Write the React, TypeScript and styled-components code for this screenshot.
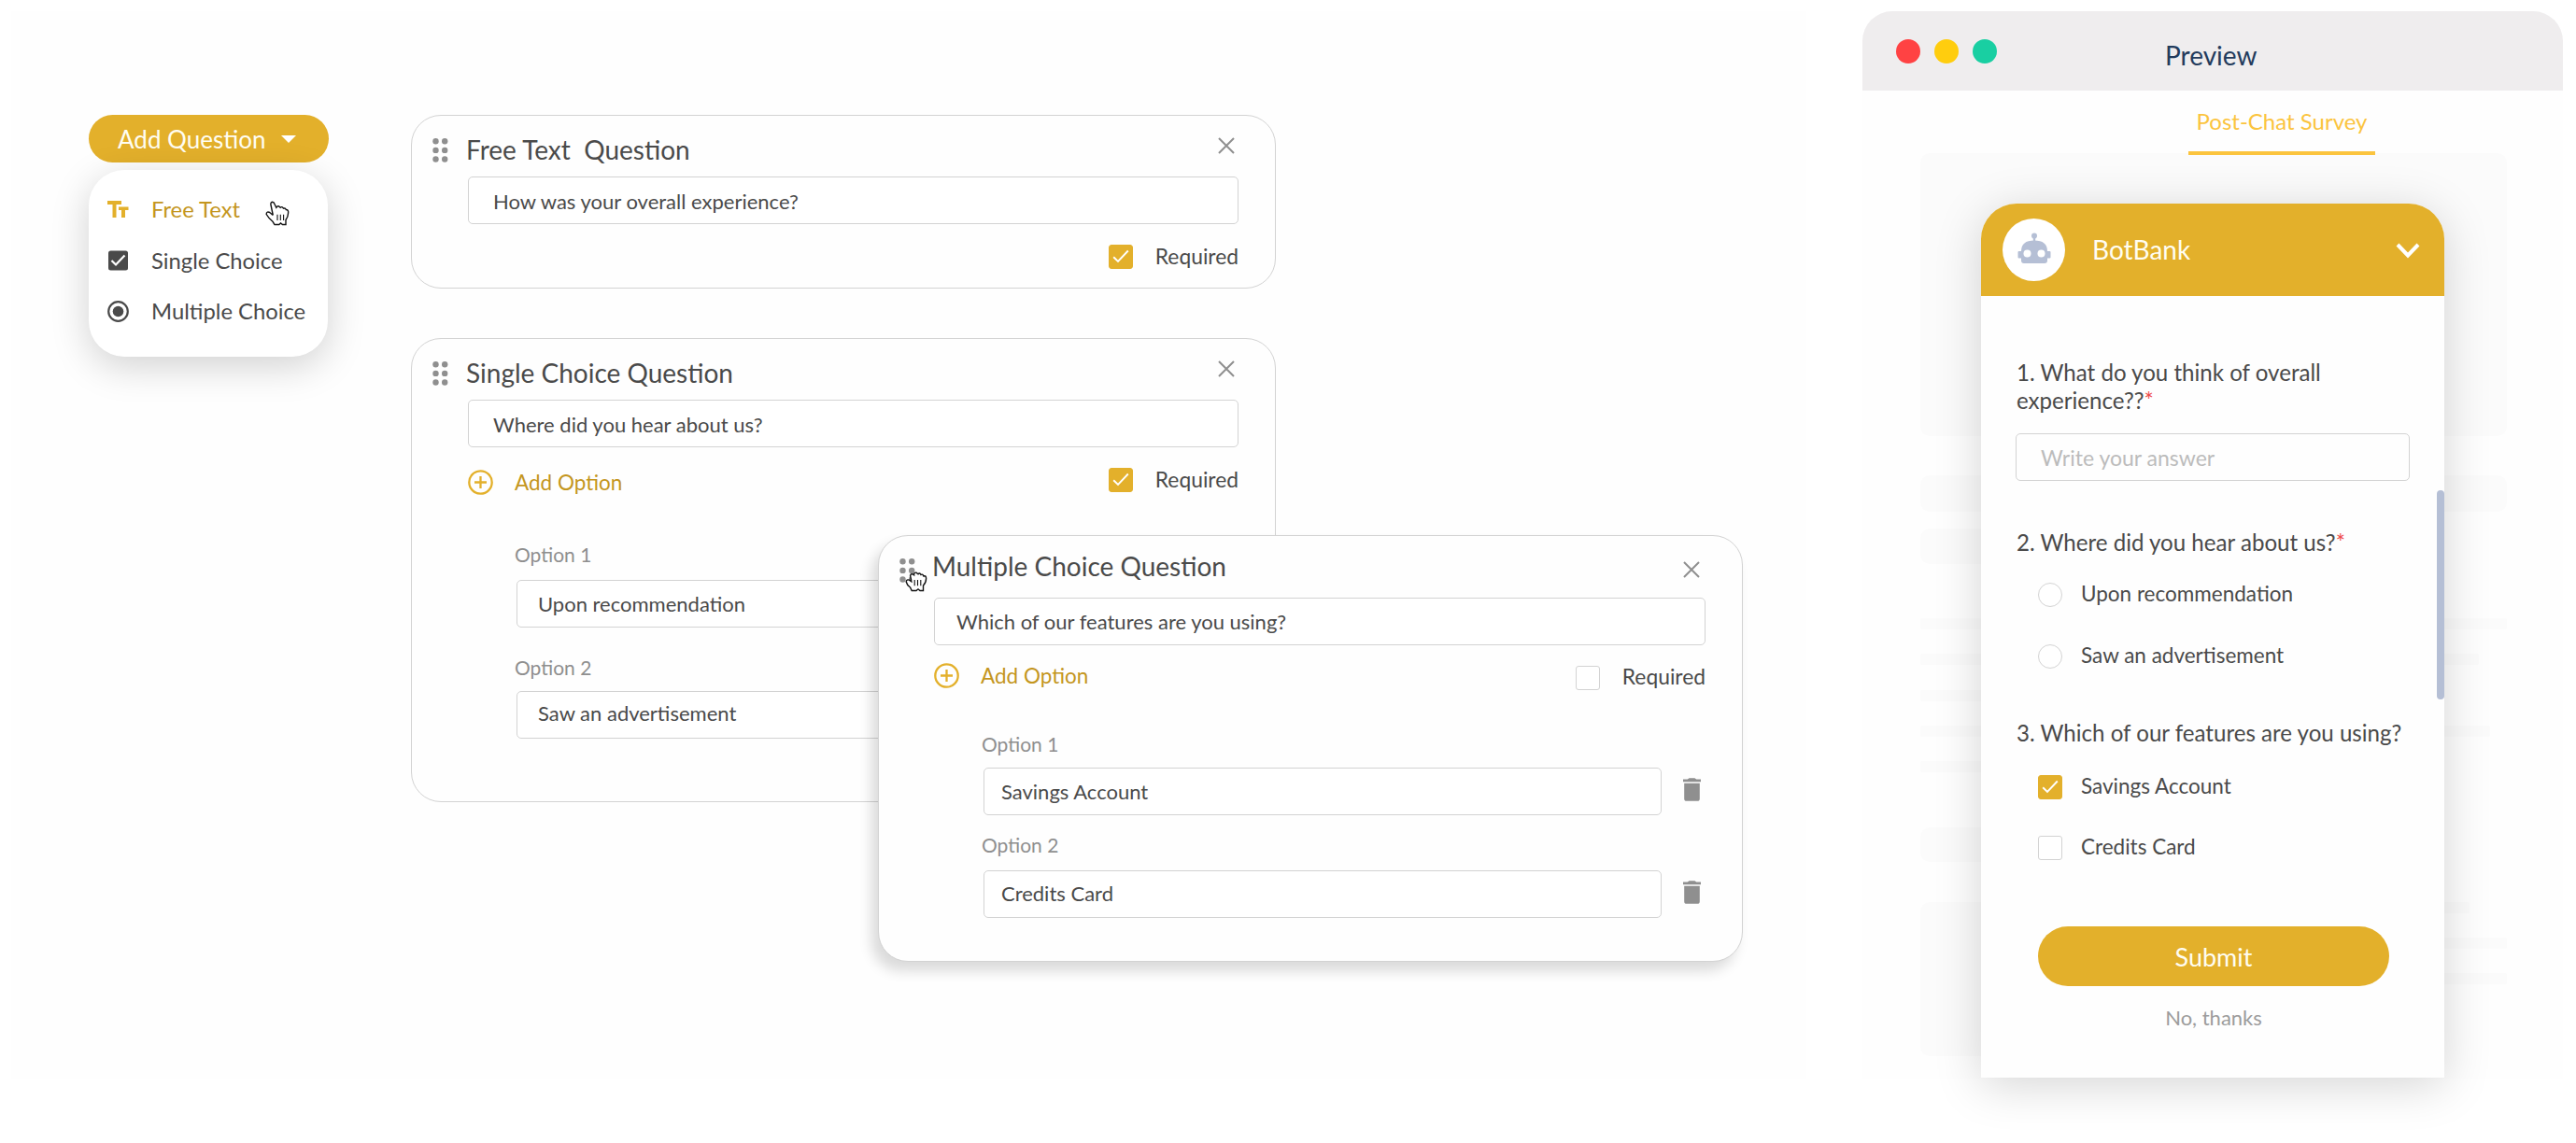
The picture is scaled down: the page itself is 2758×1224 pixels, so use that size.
import React from "react";
import styled, { createGlobalStyle, css } from "styled-components";

const GlobalStyle = createGlobalStyle`
  * {
    box-sizing: border-box;
  }

  body {
    margin: 0;
    background-color: #ffffff;
    color: #4a4a4a;
    font-family: Lato, sans-serif;
  }
`;

const gold = "#e3b02b";
const darkGold = "#c4961e";
const line = "#d3d3d3";

export const Page = styled.main`
  width: 2758px;
  height: 1224px;
  display: flex;
  overflow: hidden;
`;

export const Builder = styled.section`
  position: relative;
  width: 1922px;
  height: 1144px;
  margin: 12px 60px 0 12px;
  padding: 111px 0 0 83px;
  display: flex;
  align-items: flex-start;
  background-color: #fefefe;
`;

export const AddQuestion = styled.div`
  width: 257px;
  margin-right: 88px;
`;

export const AddButton = styled.button`
  width: 257px;
  height: 51px;
  padding: 1px 35px 0 31px;
  display: flex;
  align-items: center;
  justify-content: space-between;
  border: none;
  border-radius: 26px;
  background-color: ${gold};
  color: #fffdf2;
  font-family: inherit;
  font-size: 26px;
  line-height: 32px;
`;

export const Menu = styled.ul`
  position: relative;
  width: 256px;
  height: 200px;
  margin: 8px 0 0;
  padding: 15px 0 0 20px;
  list-style: none;
  border-radius: 38px;
  background-color: #ffffff;
  box-shadow: 0 10px 40px rgba(0, 0, 0, 0.18);
`;

export const MenuItem = styled.li<{ $active?: boolean }>`
  height: 54.5px;
  display: flex;
  align-items: center;
  gap: 24px;
  color: ${({ $active }) => ($active ? darkGold : "#4a4a4a")};
  font-size: 23.8px;

  svg {
    flex: none;
  }
`;

export const MenuCursor = styled.svg`
  position: absolute;
  left: 189px;
  top: 33px;
`;

export const CardList = styled.div`
  display: flex;
  flex-direction: column;
  gap: 53px;
`;

export const Card = styled.article<{ $height: number; $dragged?: boolean }>`
  width: 926px;
  height: ${({ $height }) => $height}px;
  padding: 0 39px 0 60px;
  border: 1px solid ${line};
  border-radius: 32px;
  background-color: #fefefe;

  ${({ $dragged }) =>
    $dragged &&
    css`
      position: absolute;
      left: 928px;
      top: 561px;
      padding-left: 59px;
      box-shadow: -7px 10px 14px rgba(0, 0, 0, 0.14);
    `}
`;

export const CardHeader = styled.header<{ $dragged?: boolean }>`
  height: ${({ $dragged }) => ($dragged ? 66 : 65)}px;
  margin-left: ${({ $dragged }) => ($dragged ? -37 : -38)}px;
  padding-top: 24px;
  display: flex;
  align-items: flex-start;
`;

export const CardTitle = styled.h2<{ $dragged?: boolean }>`
  flex: 1;
  margin: ${({ $dragged }) => ($dragged ? "-9px 0 0 18px" : "-5px 0 0 19px")};
  font-size: 28px;
  font-weight: 400;
  line-height: 34px;
  white-space: pre;
`;

export const CloseIcon = styled.svg<{ $dragged?: boolean }>`
  margin: ${({ $dragged }) => ($dragged ? "3px 6px 0 0" : "-1px 4px 0 0")};
`;

export const Field = styled.div<{ $indent?: number; $lift?: number }>`
  height: 51px;
  flex: 1;
  padding-left: ${({ $indent }) => $indent ?? 27}px;
  border: 1px solid ${line};
  border-radius: 5px;
  background-color: #ffffff;
  font-size: 22px;
  line-height: ${({ $lift }) => 50 - 2 * ($lift ?? 0)}px;
`;

export const Tools = styled.div`
  height: 26px;
  margin-top: 22px;
  display: flex;
  align-items: center;
`;

export const AddOption = styled.span<{ $dragged?: boolean }>`
  margin-top: ${({ $dragged }) => ($dragged ? -5 : 5)}px;
  display: flex;
  align-items: center;
  gap: 23px;
  color: ${darkGold};
  font-size: 22.5px;
`;

export const Required = styled.label`
  margin-left: auto;
  display: flex;
  align-items: center;
  gap: 24px;
  font-size: 22.8px;
  line-height: 22px;
`;

export const RequiredText = styled.span<{ $dragged?: boolean }>`
  padding-bottom: ${({ $dragged }) => ($dragged ? 4 : 3)}px;
`;

export const Option = styled.div<{ $gap: number; $dragged?: boolean }>`
  margin: ${({ $gap }) => $gap}px 0 0 ${({ $dragged }) => ($dragged ? 53 : 52)}px;
`;

export const OptionLabel = styled.div<{ $height: number }>`
  height: ${({ $height }) => $height}px;
  margin-left: -2px;
  color: #8f8f8f;
  font-size: 21px;
  line-height: 26px;
`;

export const OptionRow = styled.div`
  display: flex;
  align-items: center;
  gap: 23px;
  padding-right: 5px;

  svg {
    margin-bottom: 4px;
  }
`;

export const GrabCursor = styled.svg`
  position: absolute;
  left: 28px;
  top: 38px;
`;

export const Preview = styled.aside`
  width: 750px;
  height: 1144px;
  margin-top: 12px;
`;

export const TitleBar = styled.header`
  height: 85px;
  padding: 0 0 0 36px;
  display: flex;
  align-items: center;
  gap: 15px;
  border-radius: 32px 32px 0 0;
  background-color: #efedee;
`;

export const Light = styled.span<{ $color: string }>`
  width: 26px;
  height: 26px;
  border-radius: 50%;
  background-color: ${({ $color }) => $color};
`;

export const WindowTitle = styled.h1`
  margin: 8px 0 0 165px;
  color: #233b5c;
  font-size: 28px;
  font-weight: 400;
`;

export const PreviewBody = styled.div`
  height: 1058px;
  background-color: #fefefe;
`;

export const Tab = styled.div`
  position: relative;
  z-index: 1;
  width: 200px;
  height: 69px;
  margin-left: 349px;
  padding-top: 18px;
  border-bottom: 4px solid #fbc43e;
  color: #fbc43e;
  font-size: 24px;
  line-height: 30px;
  text-align: center;
`;

export const Backdrop = styled.div`
  position: relative;
  width: 628px;
  margin: -2px 0 0 62px;
`;

export const Ghost = styled.div<{ $height: number; $gap?: number; $width?: number }>`
  width: ${({ $width }) => $width ?? 628}px;
  height: ${({ $height }) => $height}px;
  margin-top: ${({ $gap }) => $gap ?? 0}px;
  border-radius: ${({ $height }) => ($height > 30 ? 10 : 2)}px;
  background-color: #fbfbfb;
`;

export const GhostRow = styled.div`
  margin-top: 43px;
  display: flex;
`;

export const Chat = styled.section`
  position: absolute;
  left: 65px;
  top: 54px;
  width: 496px;
  height: 936px;
  border-radius: 38px 38px 0 0;
  background-color: #fefefe;
  box-shadow: 0 8px 50px rgba(0, 0, 0, 0.17);
`;

export const ChatHeader = styled.header`
  height: 99px;
  padding: 0 26px 0 23px;
  display: flex;
  align-items: center;
  border-radius: 38px 38px 0 0;
  background-color: ${gold};
  color: #fffdf2;
`;

export const Avatar = styled.div`
  width: 67px;
  height: 67px;
  padding-bottom: 3px;
  display: flex;
  align-items: center;
  justify-content: center;
  border-radius: 50%;
  background-color: #ffffff;
`;

export const BotName = styled.div`
  flex: 1;
  margin-left: 29px;
  padding-bottom: 2px;
  font-size: 28px;
`;

export const ChatBody = styled.div`
  padding: 67px 37px 0;
`;

export const Question = styled.p<{ $gap?: number }>`
  margin: ${({ $gap }) => $gap ?? 0}px -20px 0 1px;
  font-size: 24.1px;
  line-height: 30px;
`;

export const Star = styled.span`
  color: #ee4b4b;
`;

export const Answer = styled.div`
  height: 51px;
  margin-top: 20px;
  padding-left: 26px;
  border: 1px solid ${line};
  border-radius: 5px;
  color: #bcbcbc;
  font-size: 23px;
  line-height: 51px;
`;

export const Choice = styled.label<{ $gap: number }>`
  height: 26px;
  margin: ${({ $gap }) => $gap}px 0 0 24px;
  display: flex;
  align-items: center;
  gap: 20px;
  font-size: 22.5px;
  line-height: 24px;
`;

export const ChoiceText = styled.span`
  padding-bottom: 2px;
`;

export const Radio = styled.span`
  width: 26px;
  height: 26px;
  border: 1px solid ${line};
  border-radius: 50%;
  background-color: #ffffff;
`;

export const Box = styled.span<{ $checked?: boolean }>`
  width: 26px;
  height: 26px;
  display: flex;
  align-items: center;
  justify-content: center;
  border: 1px solid ${({ $checked }) => ($checked ? gold : line)};
  border-radius: 3px;
  background-color: ${({ $checked }) => ($checked ? gold : "#ffffff")};
`;

export const Submit = styled.button`
  width: 376px;
  height: 64px;
  margin: 71px 0 0 24px;
  border: none;
  border-radius: 32px;
  background-color: ${gold};
  color: #fffdf2;
  font-family: inherit;
  font-size: 27px;
`;

export const NoThanks = styled.div`
  margin-top: 20px;
  padding-left: 2px;
  color: #9c9c9c;
  font-size: 22px;
  line-height: 28px;
  text-align: center;
`;

export const ScrollThumb = styled.span`
  position: absolute;
  right: 0;
  top: 307px;
  width: 8px;
  height: 224px;
  border-radius: 4px;
  background-color: #b5bfd5;
`;

const Checkbox = ({ checked }: { checked?: boolean }) => (
  <Box $checked={checked}>
    {checked && (
      <svg width="18" height="16" viewBox="0 0 18 16" fill="none">
        <path d="M1.2 8.3L6 13L16.8 1.5" stroke="#fff" strokeWidth="1.9" />
      </svg>
    )}
  </Box>
);

const Dots = () => (
  <svg width="17" height="26" viewBox="0 0 17 26" fill="#8f8f8f">
    {[3.3, 12.9, 22.5].map((y) => (
      <React.Fragment key={y}>
        <circle cx="3.5" cy={y} r="3.2" />
        <circle cx="13.2" cy={y} r="3.2" />
      </React.Fragment>
    ))}
  </svg>
);

const Trash = () => (
  <svg width="19" height="25" viewBox="0 0 19 25" fill="#8f8f8f">
    <path d="M0 1.4h4.8L6.5 0.3h6l1.7 1.1H19v2.9H0zM1.2 5.7h16.6v16.5a2.6 2.6 0 0 1-2.6 2.6H3.8a2.6 2.6 0 0 1-2.6-2.6z" />
  </svg>
);

const Plus = () => (
  <svg width="27" height="27" viewBox="0 0 27 27" fill="none" stroke={gold} strokeWidth="2.3">
    <circle cx="13.5" cy="13.5" r="12.2" />
    <path d="M13.5 7v13M7 13.5h13" />
  </svg>
);

type CardProps = {
  title: string;
  question: string;
  height: number;
  required?: boolean;
  dragged?: boolean;
  options?: string[];
};

const QuestionCard = ({ title, question, height, required, dragged, options }: CardProps) => {
  const gaps = dragged ? [45, 19] : [54, 30];
  const labels = dragged ? [38, 40] : [40, 38];

  return (
    <Card $height={height} $dragged={dragged}>
      <CardHeader $dragged={dragged}>
        <Dots />
        <CardTitle $dragged={dragged}>{title}</CardTitle>
        <CloseIcon $dragged={dragged} width="18" height="18" viewBox="0 0 18 18">
          <path d="M1 1L17 17M17 1L1 17" stroke="#8f8f8f" strokeWidth="2" />
        </CloseIcon>
      </CardHeader>
      <Field $indent={dragged ? 23 : 26} $lift={dragged ? 0 : -1}>
        {question}
      </Field>
      <Tools>
        {options && (
          <AddOption $dragged={dragged}>
            <Plus />
            Add Option
          </AddOption>
        )}
        <Required>
          <Checkbox checked={required} />
          <RequiredText $dragged={dragged}>Required</RequiredText>
        </Required>
      </Tools>
      {options?.map((option, index) => (
        <Option key={option} $gap={gaps[index]} $dragged={dragged}>
          <OptionLabel $height={labels[index]}>Option {index + 1}</OptionLabel>
          <OptionRow>
            <Field $indent={dragged ? 18 : 22} $lift={index ? (dragged ? 1 : 2) : 0}>
              {option}
            </Field>
            <Trash />
          </OptionRow>
        </Option>
      ))}
      {dragged && (
        <GrabCursor width="24" height="22" viewBox="0 0 24 22" fill="#fff" stroke="#111" strokeWidth="1.4">
          <path d="M6.5 8.5L5.6 4.6Q6 2 8.500 3L9.600 3.800Q9.500 .8 12 1.200L14 2.800Q15.500 .8 17 3.500Q19 2.300 20 5Q22.600 4 22.600 7.500Q22.500 12 19.500 15V20.500H16L14 18.800L12 20.500H7.200L5.500 17Q2 14.500 1.200 11Q1.500 8 4.500 9.200L6.800 10.800Z" />
          <path d="M10.2 9v6.200M13.500 9v6.200M16.800 9v6.200" strokeWidth="1.1" />
        </GrabCursor>
      )}
    </Card>
  );
};

const App = () => {
  return (
    <Page>
      <GlobalStyle />
      <Builder>
        <AddQuestion>
          <AddButton>
            Add Question
            <svg width="16" height="8" viewBox="0 0 16 8" fill="#fff">
              <path d="M0 0h16L8 8z" />
            </svg>
          </AddButton>
          <Menu>
            <MenuItem $active>
              <svg width="23" height="19" viewBox="0 0 23 19" fill={gold}>
                <path d="M0 0h15v4H9.500v14H5.500V4H0zM12 6.500h10.500v3.500H19v8h-4v-8h-3z" />
              </svg>
              Free Text
            </MenuItem>
            <MenuItem>
              <svg width="23" height="22" viewBox="0 0 23 22" fill="none">
                <rect x="1" y="0.5" width="21" height="21" rx="2.5" fill="#4a4a4a" />
                <path d="M4.5 11L9 15.500L18.500 5.500" stroke="#fff" strokeWidth="2.2" />
              </svg>
              Single Choice
            </MenuItem>
            <MenuItem>
              <svg width="23" height="23" viewBox="0 0 23 23" fill="none">
                <circle cx="11.5" cy="11.5" r="10.3" stroke="#4a4a4a" strokeWidth="2.2" />
                <circle cx="11.5" cy="11.5" r="5.8" fill="#4a4a4a" />
              </svg>
              Multiple Choice
            </MenuItem>
            <MenuCursor width="27" height="27" viewBox="0 0 27 27" fill="#fff" stroke="#111" strokeWidth="1.4">
              <path d="M8.300 15.500L6 4.500Q5.400 1.500 7.600 1.300Q9.300 1.300 10.100 3.800L11.800 7.300Q13 5.300 14.800 6L16.200 7.300Q18 5.500 19.500 8.200Q21.500 7.500 22.300 9.500Q25 9.500 24.600 13Q24.500 17 22 20.500V25.500H18.500L16.500 24L14.800 25.500H10L8 22.300Q3.500 18.500 1.200 14.500Q1.200 11 4.800 12.500L8.300 15.500" />
              <path d="M13 14.800v6.200M16.300 14.800v6.200M19.600 14.800v6.200" strokeWidth="1.1" />
            </MenuCursor>
          </Menu>
        </AddQuestion>

        <CardList>
          <QuestionCard
            title="Free Text  Question"
            question="How was your overall experience?"
            height={186}
            required
          />
          <QuestionCard
            title="Single Choice Question"
            question="Where did you hear about us?"
            height={497}
            required
            options={["Upon recommendation", "Saw an advertisement"]}
          />
        </CardList>
        <QuestionCard
          title="Multiple Choice Question"
          question="Which of our features are you using?"
          height={457}
          dragged
          options={["Savings Account", "Credits Card"]}
        />
      </Builder>

      <Preview>
        <TitleBar>
          <Light $color="#ff4243" />
          <Light $color="#ffcd0e" />
          <Light $color="#19cfa2" />
          <WindowTitle>Preview</WindowTitle>
        </TitleBar>
        <PreviewBody>
          <Tab>Post-Chat Survey</Tab>
          <Backdrop>
            <Ghost $height={303} />
            <Ghost $height={39} $gap={42} />
            <Ghost $height={38} $gap={18} $width={300} />
            <Ghost $height={12} $gap={58} />
            <Ghost $height={12} $gap={26} $width={598} />
            <Ghost $height={12} $gap={27} $width={300} />
            <Ghost $height={12} $gap={26} $width={610} />
            <Ghost $height={12} $gap={26} $width={300} />
            <Ghost $height={37} $gap={59} $width={300} />
            <GhostRow>
              <Ghost $height={165} $width={300} />
              <div>
                <Ghost $height={12} $width={288} />
                <Ghost $height={12} $gap={26} $width={328} />
                <Ghost $height={12} $gap={26} $width={328} />
              </div>
            </GhostRow>
            <Chat>
              <ChatHeader>
                <Avatar>
                  <svg width="36" height="34" viewBox="0 0 36 34" fill="#b5bfd5">
                    <circle cx="18" cy="3.5" r="3" />
                    <path d="M16.8 5h2.400v5h-2.400z" />
                    <path d="M4 20Q4 8.500 18 8.500T32 20h2.500q1 0 1 1v5.500q0 1-1 1H32v2.500q0 3-3 3H7q-3 0-3-3v-2.500H1.500q-1 0-1-1V21q0-1 1-1z" />
                    <circle cx="10.5" cy="22.5" r="4" fill="#fff" />
                    <circle cx="25.5" cy="22.5" r="4" fill="#fff" />
                  </svg>
                </Avatar>
                <BotName>BotBank</BotName>
                <svg width="26" height="18" viewBox="0 0 26 18" fill="none">
                  <path d="M2 3L13 14.500L24 3" stroke="#fff" strokeWidth="4" />
                </svg>
              </ChatHeader>
              <ChatBody>
                <Question>
                  1. What do you think of overall
                  <br />
                  experience??<Star>*</Star>
                </Question>
                <Answer>Write your answer</Answer>
                <Question $gap={51}>
                  2. Where did you hear about us?<Star>*</Star>
                </Question>
                <Choice $gap={28}>
                  <Radio />
                  <ChoiceText>Upon recommendation</ChoiceText>
                </Choice>
                <Choice $gap={40}>
                  <Radio />
                  <ChoiceText>Saw an advertisement</ChoiceText>
                </Choice>
                <Question $gap={54}>3. Which of our features are you using?</Question>
                <Choice $gap={30}>
                  <Checkbox checked />
                  <ChoiceText>Savings Account</ChoiceText>
                </Choice>
                <Choice $gap={39}>
                  <Checkbox />
                  <ChoiceText>Credits Card</ChoiceText>
                </Choice>
                <Submit>Submit</Submit>
                <NoThanks>No, thanks</NoThanks>
              </ChatBody>
              <ScrollThumb />
            </Chat>
          </Backdrop>
        </PreviewBody>
      </Preview>
    </Page>
  );
};
export default App;
